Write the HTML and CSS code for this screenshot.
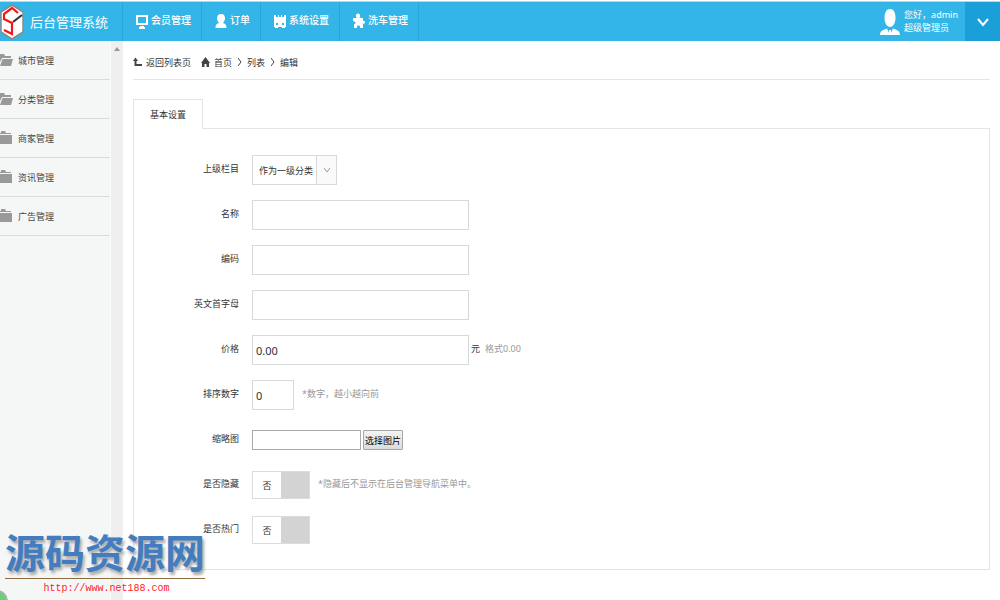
FILE: index.html
```html
<!DOCTYPE html>
<html lang="zh-CN">
<head>
<meta charset="utf-8">
<title>后台管理系统</title>
<link rel="stylesheet" href="styles.css">
</head>
<body>
<svg class="defs" aria-hidden="true">
  <symbol id="open-folder" viewBox="0 0 13 14"><path d="M0 1h4l1 2h6v2H2L0 9z M2.500 6H13l-2 7H0z"/></symbol>
  <symbol id="folder" viewBox="0 0 13 14"><path d="M1 0h4l1 2h5v1H0V2h1z M0 4h12v9H0z"/></symbol>
</svg>
<header class="header">
  <div class="brand">
    <svg class="logo" viewBox="0 0 24 36">
      <path d="M12 1l11 7v20l-11 7L1 28V8z" fill="#fff" stroke="#8a8a8a" stroke-width="1.500"/>
      <path d="M18 9l-6-5-8 6v5l8 4v11l-8-4" fill="none" stroke="#f3161d" stroke-width="2.200"/>
      <path d="M13 18l9-7" stroke="#333" stroke-width="2.200"/>
    </svg>
    <h1 class="title">后台管理系统</h1>
  </div>
  <nav class="nav">
    <a href="#"><svg viewBox="0 0 12 16"><path fill-rule="evenodd" d="M0 2h12v10H0z M2 4v6h8V4z M4 13h4v1h1v2H3v-2h1z"/></svg>会员管理</a>
    <a href="#"><svg viewBox="0 0 12 16"><path d="M6 1c3 0 4 2 4 4.500S8.500 9 8 10c2 .6 3.500 1.500 3.500 5H.5C.5 11.500 2 10.600 4 10 3.500 9 2 8 2 5.500S3 1 6 1z"/></svg>订单</a>
    <a href="#"><svg viewBox="0 0 12 16"><path fill-rule="evenodd" d="M0 2h2v2h2V2h1v2h2V2h1v2h2V2h2v12h-1v1H8v-1H4v1H1v-1H0z M2 10v2h2v-2z M8 10v2h2v-2z"/></svg>系统设置</a>
    <a href="#"><svg viewBox="0 0 12 16"><path d="M4 5C2 3 3 .5 5 .5S8 3 6.500 5H10v3c2.500-1.500 2.500 4 0 2.500V15H7c1-3.500-4-3.500-3 0H1v-4c2 1 2-3.500-1-2.500V5z"/></svg>洗车管理</a>
  </nav>
  <div class="user">
    <svg class="avatar" viewBox="0 0 20 28"><path d="M10 1c4 0 5.500 4 5.500 9S13 19 10 19s-5.500-4-5.500-9S6 1 10 1z"/><path d="M0 27c0-4 3-5 7-6.500l2 4.500v-3h2v3l2-4.500c4 1.500 7 2.500 7 6.500z"/></svg>
    <p>您好，admin<br>超级管理员</p>
  </div>
  <button class="menu" type="button" aria-label="展开菜单"><svg viewBox="0 0 12 10"><path d="M1 1l5 6 5-6"/></svg></button>
</header>
<div class="body">
  <aside class="sidebar">
    <ul class="side-list">
      <li><a href="#"><svg><use href="#open-folder"/></svg>城市管理</a></li>
      <li><a href="#"><svg><use href="#open-folder"/></svg>分类管理</a></li>
      <li><a href="#"><svg><use href="#folder"/></svg>商家管理</a></li>
      <li><a href="#"><svg><use href="#folder"/></svg>资讯管理</a></li>
      <li><a href="#"><svg><use href="#folder"/></svg>广告管理</a></li>
    </ul>
    <div class="track"><svg viewBox="0 0 6 4"><path d="M0 4l3-4 3 4z"/></svg></div>
  </aside>
  <main class="main">
    <nav class="crumbs">
      <a class="back" href="#"><svg viewBox="0 0 9 10"><path d="M2.500 3v5H9" fill="none" stroke="#444" stroke-width="2"/><path d="M0 4l2.500-3.500L5 4z" fill="#444"/></svg>返回列表页</a>
      <a href="#"><svg viewBox="0 0 9 10"><path d="M4.500 0L9 6H8v4H5.500V7h-2v3H1V6H0z" fill="#444"/></svg>首页</a>
      <svg class="sep" viewBox="0 0 4 8"><path d="M0 0l3 4-3 4"/></svg>
      <a href="#">列表</a>
      <svg class="sep" viewBox="0 0 4 8"><path d="M0 0l3 4-3 4"/></svg>
      <span>编辑</span>
    </nav>
    <div class="tabs"><button class="tab" type="button">基本设置</button></div>
    <form class="panel">
      <div class="row"><label for="parent">上级栏目</label>
        <div class="select"><select id="parent"><option>作为一级分类</option></select><span class="arrow"><svg viewBox="0 0 6 6"><path d="M0 1l3 4 3-4"/></svg></span></div></div>
      <div class="row"><label for="name">名称</label><input class="text" id="name" type="text"></div>
      <div class="row"><label for="code">编码</label><input class="text" id="code" type="text"></div>
      <div class="row"><label for="initial">英文首字母</label><input class="text" id="initial" type="text"></div>
      <div class="row"><label for="price">价格</label><div class="field"><input class="text" id="price" type="text" value="0.00"><span class="unit">元</span><span class="hint near">格式0.00</span></div></div>
      <div class="row"><label for="order">排序数字</label><div class="field"><input class="text short" id="order" type="text" value="0"><span class="hint">*数字，越小越向前</span></div></div>
      <div class="row"><label for="thumb">缩略图</label><div class="field"><input class="file" id="thumb" type="text"><button class="pick" type="button">选择图片</button></div></div>
      <div class="row"><label for="hidden">是否隐藏</label><div class="field"><label class="toggle"><input id="hidden" type="checkbox"><span>否</span></label><span class="hint">*隐藏后不显示在后台管理导航菜单中。</span></div></div>
      <div class="row"><label for="hot">是否热门</label><div class="field"><label class="toggle"><input id="hot" type="checkbox"><span>否</span></label></div></div>
    </form>
  </main>
</div>
<div class="watermark"><strong>源码资源网</strong><span>http://www.net188.com</span></div>
<div class="orb"></div>
</body>
</html>
```
FILE: styles.css
```css
* { box-sizing: border-box; }
body {
  margin: 0;
  min-height: 100vh;
  display: flex;
  flex-direction: column;
  position: relative;
  overflow: hidden;
  background: #fff;
  color: #333;
  font: 9px/13px "Noto Sans", "Noto Sans CJK SC", sans-serif;
}
a { color: inherit; text-decoration: none; }
input, button, select { font: inherit; color: inherit; margin: 0; border-radius: 0; }
.defs { display: none; }

.header {
  display: flex;
  height: 40px;
  margin-top: 1px;
  border-top: 1px solid #c5d5da;
  background: #34b5e7;
  color: #fff;
}
.brand { display: flex; align-items: center; width: 122px; gap: 6px; }
.logo { width: 24px; height: 36px; }
.title { margin: 0; font-size: 13px; line-height: 20px; font-weight: 400; }
.nav { display: flex; flex: 1; }
.nav a {
  display: flex;
  align-items: center;
  gap: 3px;
  padding: 0 10px 2px 13px;
  border-right: 1px solid #29a6da;
  font-size: 10px;
  font-weight: 500;
}
.nav a:first-child { border-left: 1px solid #29a6da; }
.nav svg { width: 12px; height: 16px; fill: #fff; }
.user { display: flex; align-items: center; gap: 4px; padding-right: 7px; }
.user p { margin: 0; padding-bottom: 2px; }
.avatar { width: 20px; height: 28px; fill: #fff; }
.menu { width: 35px; padding: 0; border: 0; background: #1a9fd8; }
.menu svg { width: 12px; height: 10px; fill: none; stroke: #fff; stroke-width: 2; vertical-align: middle; }

.body { display: flex; flex: 1; }
.sidebar { display: flex; width: 123px; background: #f5f7f7; }
.side-list { flex: 1; margin: 0; padding: 0; list-style: none; }
.side-list li { border-bottom: 1px solid #d9dcdc; }
.side-list a { display: flex; align-items: center; gap: 5px; height: 38px; color: #444; }
.side-list svg { width: 13px; height: 14px; fill: #999; }
.track { width: 13px; padding-top: 6px; background: #efefef; border-left: 1px solid #fafafa; }
.track svg { width: 6px; height: 4px; fill: #999; display: block; margin: 0 auto; }

.main { flex: 1; padding: 0 10px 30px; }
.crumbs { display: flex; align-items: center; height: 39px; padding-top: 4px; border-bottom: 1px solid #e4e4e4; }
.crumbs a { display: flex; align-items: center; gap: 4px; }
.crumbs svg { width: 9px; height: 10px; }
.crumbs .back { margin-right: 10px; }
.crumbs .sep { width: 4px; height: 8px; margin: 0 5px 0 6px; fill: none; stroke: #444; }
.tabs { display: flex; margin-top: 19px; }
.tab {
  width: 70px;
  height: 30px;
  margin-bottom: -1px;
  padding: 0;
  border: 1px solid #e4e4e4;
  border-bottom: 0;
  background: #fff;
  position: relative;
}
.panel { display: grid; gap: 15px; padding: 26px 0 24px; border: 1px solid #e4e4e4; }
.row { display: grid; grid-template-columns: 105px 1fr; column-gap: 13px; align-items: center; min-height: 30px; }
.row > label { padding-bottom: 3px; text-align: right; }
.field { display: flex; align-items: center; }
.text { width: 217px; height: 30px; padding: 0 3px; border: 1px solid #d8d8d8; background: #fff; font-size: 11px; }
.short { width: 42px; }
.unit { margin-left: 2px; padding-bottom: 3px; }
.hint { margin-left: 8px; padding-bottom: 3px; color: #999; }
.near { margin-left: 5px; }
.select { display: grid; width: 85px; height: 30px; }
.select select { grid-area: 1 / 1; appearance: none; padding: 0 0 0 6px; border: 1px solid #d8d8d8; background: #fff; outline: 0; }
.arrow { grid-area: 1 / 1; justify-self: end; display: grid; place-items: center; width: 21px; border: 1px solid #d8d8d8; background: #fafafa; pointer-events: none; }
.arrow svg { width: 6px; height: 6px; fill: none; stroke: #999; }
.file { width: 109px; height: 20px; padding: 0 2px; border: 1px solid #aaa; background: #fff; }
.pick { width: 40px; height: 20px; margin-left: 2px; padding: 0; border: 1px solid #a6a6a6; border-radius: 1px; background: linear-gradient(#f3f3f3, #dcdcdc); color: #000; white-space: nowrap; }
.toggle { display: grid; align-items: center; width: 58px; height: 28px; border: 1px solid #dcdcdc; background: #fff; }
.toggle input { grid-area: 1 / 1; appearance: none; justify-self: end; width: 28px; height: 26px; background: #d3d3d3; }
.toggle span { grid-area: 1 / 1; width: 28px; text-align: center; }

.watermark { position: absolute; left: 5px; bottom: 5px; width: 200px; text-align: center; }
.watermark strong { display: block; height: 48px; border-bottom: 1px solid #8d6b3f; color: #437dc0; font-size: 40px; line-height: 44px; white-space: nowrap; text-shadow: 2px 3px 3px #aaa; }
.watermark span { display: block; padding: 3px 0 0 3px; color: #f22; font: 10px/13px "Liberation Mono", monospace; }
.orb { position: absolute; left: -14px; bottom: -12px; width: 22px; height: 22px; border: 2px solid #a5b5a8; border-radius: 50%; background: #69cf78; }
```
